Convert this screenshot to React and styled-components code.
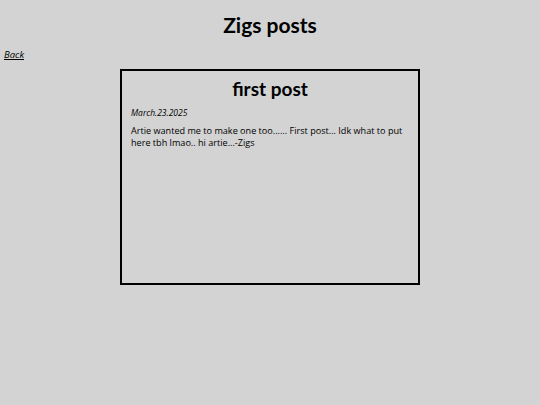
import React from 'react';
import styled, { createGlobalStyle } from 'styled-components';

const GlobalStyle = createGlobalStyle`
  html, body {
    margin: 0;
    padding: 0;
    background: #d3d3d3;
  }
  body {
    font-family: 'Lato', 'Noto Sans', sans-serif;
    color: #000;
  }
`;

const Page = styled.div`
  padding: 12px 4px 0;
`;

const Title = styled.h1`
  margin: 0;
  text-align: center;
  font-size: 21px;
  font-weight: 700;
  line-height: 26px;
`;

const BackLink = styled.a`
  display: inline-block;
  margin-top: 10px;
  font-family: 'Open Sans', sans-serif;
  font-size: 9.5px;
  line-height: 14px;
  font-style: italic;
  color: #000;
  text-decoration: underline;
`;

const Post = styled.div`
  box-sizing: border-box;
  width: 300px;
  height: 216px;
  margin: 7px auto 0;
  padding: 6px 9px;
  border: 2.5px solid #000;
`;

const PostTitle = styled.h2`
  margin: 0;
  text-align: center;
  font-size: 19px;
  font-weight: 700;
  line-height: 24px;
`;

const PostDate = styled.div`
  margin-top: 6px;
  font-family: 'Open Sans', sans-serif;
  font-size: 8.5px;
  font-style: italic;
  font-weight: 500;
`;

const PostBody = styled.p`
  margin: 7px 0 0;
  font-family: 'Open Sans', sans-serif;
  font-size: 9.1px;
  line-height: 12px;
`;

export default function App() {
  return (
    <Page>
      <GlobalStyle />
      <Title>Zigs posts</Title>
      <BackLink href="#">Back</BackLink>
      <Post>
        <PostTitle>first post</PostTitle>
        <PostDate>March.23.2025</PostDate>
        <PostBody>
          Artie wanted me to make one too...... First post... Idk what to put here tbh lmao.. hi artie...-Zigs
        </PostBody>
      </Post>
    </Page>
  );
}
